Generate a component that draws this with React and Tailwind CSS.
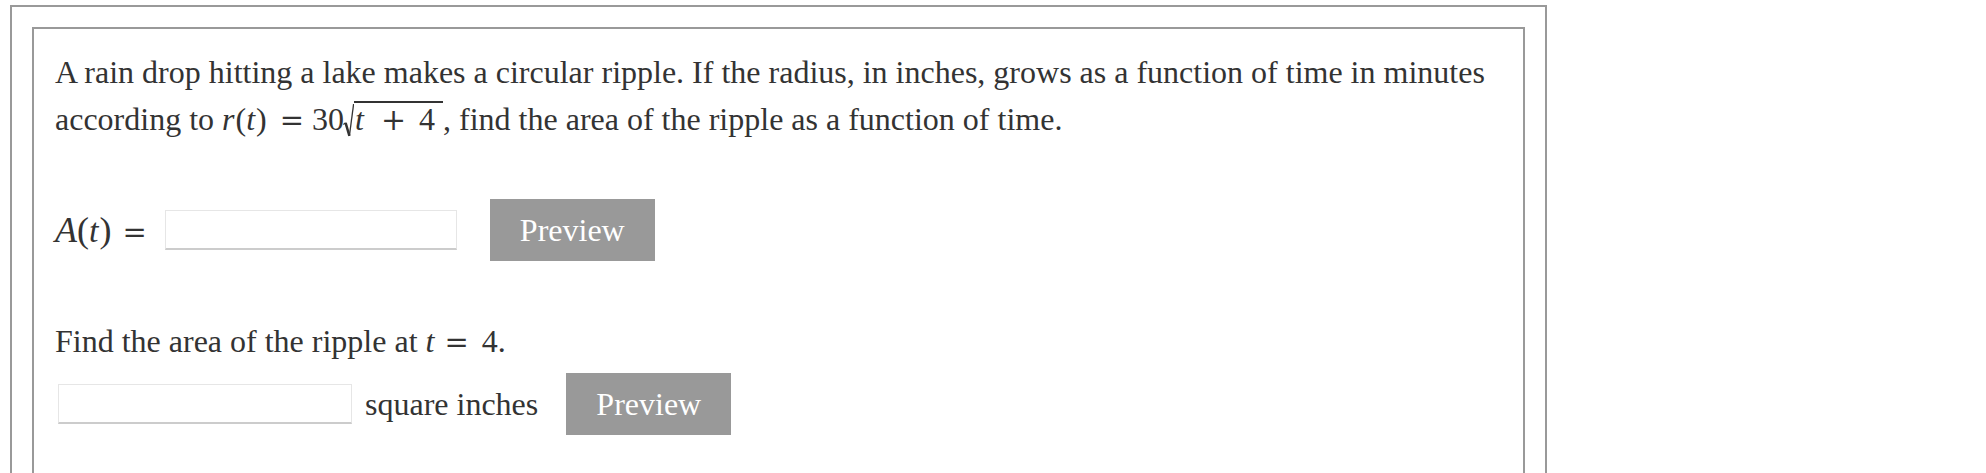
function V({ children, className = 'text-[32px]' }) {
  return <span className={`pr-[1px] italic leading-none ${className}`}>{children}</span>
}

function Eq({ className = '' }) {
  return <span className={`font-['DejaVu_Serif',serif] text-[29px] leading-none ${className}`}>=</span>
}

function Radical() {
  return (
    <svg
      width="11"
      height="35"
      viewBox="0 0 11 35"
      className="-ml-[1px] inline-block align-[-8px]"
      fill="none"
      stroke="#333"
      strokeLinejoin="miter"
    >
      <path d="M0.3 21.5 L2.6 19.8" strokeWidth="1.3" />
      <path d="M2.6 19.8 L6.4 32.8" strokeWidth="2.5" />
      <path d="M6.4 32.8 L10.6 1" strokeWidth="1.3" />
    </svg>
  )
}

export default function App() {
  return (
    <div className="min-h-screen bg-white font-['Liberation_Serif',serif] text-[32px] text-[#333]">
      <div className="ml-[10px] mt-[5px] w-[1537px] border-2 border-b-0 border-[#999] px-[20px] pt-[20px]">
        <div className="border-2 border-b-0 border-[#999] px-[21px] pb-[200px] pt-[22px]">
          <p className="leading-[43px]">
            A rain drop hitting a lake makes a circular ripple. If the radius, in inches, grows as a function of time in minutes according to{' '}
            <span className="inline-block h-[36px] w-0" />
            <V>r</V>(<V>t</V>)
            <Eq className="ml-[13px] mr-[8px]" />
            30
            <Radical />
            <span className="inline-block border-t-2 border-[#333] pl-[1px] pr-[8px] leading-[28px]">
              <V>t</V>
              <span className="ml-[16px] mr-[13px] font-['DejaVu_Serif',serif] text-[30px] leading-none">+</span>4
            </span>
            , find the area of the ripple as a function of time.
          </p>

          <div className="mt-[58px] flex h-[62px] items-center">
            <span className="whitespace-nowrap">
              <span className="text-[36px] italic">A</span>
              <span className="text-[36px]">(</span>
              <V className="text-[34px]">t</V>
              <span className="text-[36px]">)</span>
              <Eq className="ml-[11px]" />
            </span>
            <input
              type="text"
              className="ml-[18px] h-[40px] w-[292px] border border-[#e6e6e6] border-b-2 border-b-[#cccccc] bg-white outline-none"
            />
            <button
              type="button"
              className="ml-[33px] h-[62px] w-[165px] bg-[#999] text-[32px] text-white"
            >
              Preview
            </button>
          </div>

          <p className="mt-[59px] leading-[43px]">
            Find the area of the ripple at <V>t</V>
            <Eq className="ml-[9px] mr-[13px]" />4.
          </p>

          <div className="mt-[10px] flex h-[62px] items-center">
            <input
              type="text"
              className="ml-[3px] h-[40px] w-[294px] border border-[#e6e6e6] border-b-2 border-b-[#cccccc] bg-white outline-none"
            />
            <span className="ml-[13px]">square inches</span>
            <button
              type="button"
              className="ml-[28px] h-[62px] w-[165px] bg-[#999] text-[32px] text-white"
            >
              Preview
            </button>
          </div>
        </div>
      </div>
    </div>
  )
}
